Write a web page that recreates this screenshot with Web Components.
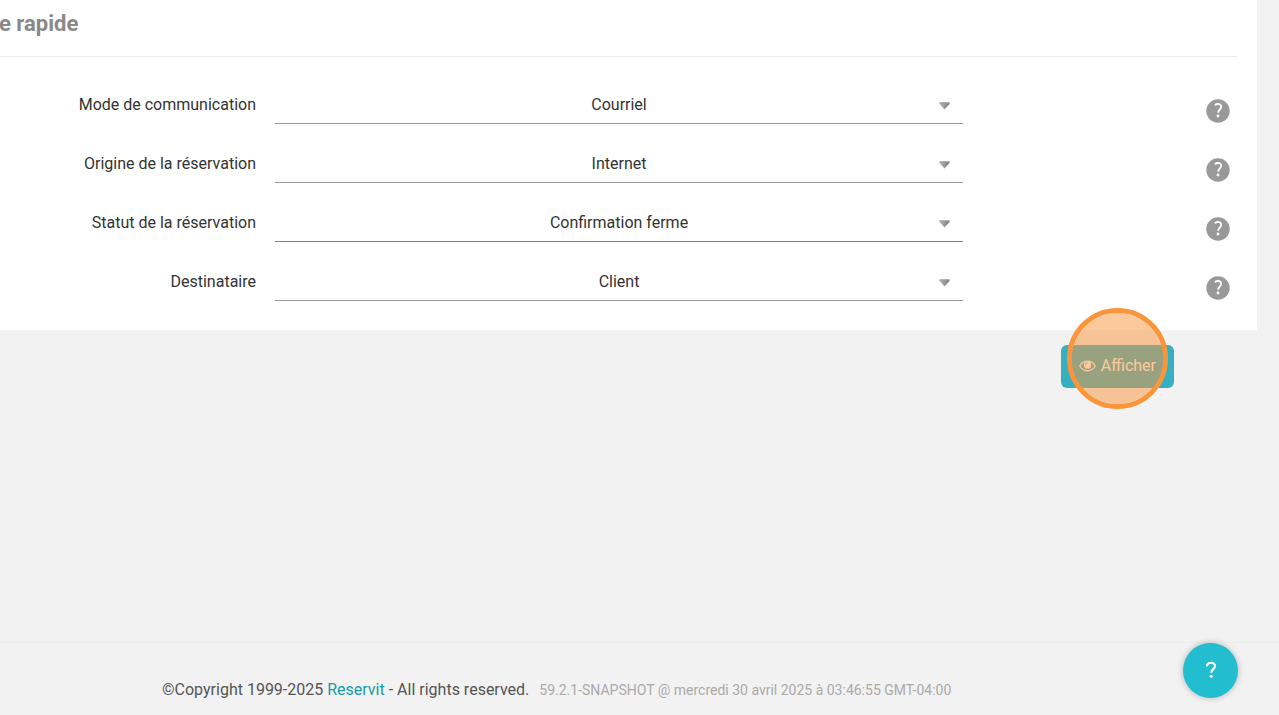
<!DOCTYPE html>
<html lang="fr">
<head>
<meta charset="utf-8">
<meta name="viewport" content="width=device-width, initial-scale=1">
<title>Reservit</title>
<style>
  html, body { margin: 0; height: 100%; }
  body { background: #f2f2f2; color: #333; font: 16px/24px Roboto, sans-serif; }
</style>
</head>
<body>
<quick-page>
  <quick-card>
    <span slot="title">e rapide</span>
    <field-row label="Mode de communication" value="Courriel"></field-row>
    <field-row label="Origine de la réservation" value="Internet"></field-row>
    <field-row label="Statut de la réservation" value="Confirmation ferme" active></field-row>
    <field-row label="Destinataire" value="Client"></field-row>
  </quick-card>
  <show-action>Afficher</show-action>
  <page-footer slot="footer"></page-footer>
  <help-bubble slot="footer"></help-bubble>
</quick-page>

<script>
const define = (name, html, setup) => {
  const template = document.createElement('template');
  template.innerHTML = html;
  customElements.define(name, class extends HTMLElement {
    constructor() {
      super();
      this.attachShadow({ mode: 'open' }).append(template.content.cloneNode(true));
    }
    connectedCallback() { if (setup) setup(this, this.shadowRoot); }
  });
};

define('quick-page', `
  <style>
    :host { display: flex; flex-direction: column; min-height: 100%; }
    main { flex: 1; }
  </style>
  <main><slot></slot></main>
  <slot name="footer"></slot>
`);

define('quick-card', `
  <style>
    :host { display: block; margin-right: 22px; background: #fff; }
    header { margin-right: 20px; padding: 8px 0 16px; border-bottom: 1px solid #ebebeb; }
    h2 { margin: 0 0 0 -1px; font-size: 22px; line-height: 32px; font-weight: 700; color: #888; }
    form { display: grid; gap: 20px; padding: 28px 27px 29px 0; }
  </style>
  <header><h2><slot name="title"></slot></h2></header>
  <form><slot></slot></form>
`);

define('field-row', `
  <style>
    :host { display: grid; grid-template-columns: 256fr 688fr 248fr; column-gap: 19px; height: 39px; }
    label { text-align: right; line-height: 39px; white-space: nowrap; }
    .box { position: relative; }
    select {
      appearance: none; display: block; box-sizing: border-box; width: 100%; height: 39px;
      margin: 0; padding: 2px 0 0; border: 0; border-bottom: 1px solid #999; border-radius: 0;
      background: transparent; color: inherit; font: inherit; text-align-last: center; outline: 0;
    }
    select.active { border-bottom-color: #1fa5b6; }
    .arrow { position: absolute; right: 13px; top: 17px; pointer-events: none; }
    button { justify-self: end; align-self: end; width: 24px; height: 24px; margin: 0 0 1px; padding: 0; border: 0; background: none; }
    button svg { display: block; }
  </style>
  <label for="field"></label>
  <div class="box">
    <select id="field"><option></option></select>
    <svg class="arrow" width="11" height="8" viewBox="0 0 11 8" aria-hidden="true">
      <defs><linearGradient id="shade" x1="0" y1="0" x2="1" y2="0"><stop stop-color="#bbb"/><stop offset="1" stop-color="#777"/></linearGradient></defs>
      <path d="M0.5 0.5h10v1.5L5.5 7.500.5 2z" fill="url(#shade)"/>
      <path d="M0.5 1h10" stroke="#999"/>
    </svg>
  </div>
  <button type="button" aria-label="Aide">
    <svg width="24" height="24" viewBox="0 0 24 24" aria-hidden="true">
      <circle cx="12" cy="12" r="11.700" fill="#999"/>
      <path d="M8.900 6.200C11.300 4.200 15.200 4.800 15.200 7.800C15.200 10.300 12.300 10.500 12.100 13.800" fill="none" stroke="#fff" stroke-width="1.800"/>
      <circle cx="12" cy="17" r="1.400" fill="#fff"/>
    </svg>
  </button>
`, (host, root) => {
  root.querySelector('label').textContent = host.getAttribute('label');
  root.querySelector('option').textContent = host.getAttribute('value');
  root.querySelector('select').classList.toggle('active', host.hasAttribute('active'));
});

define('show-action', `
  <style>
    :host { display: flex; justify-content: flex-end; padding: 15px 105px 0 0; }
    .anchor { position: relative; }
    button {
      display: flex; align-items: center; gap: 5px; height: 43px; padding: 0 18px 2px;
      border: 0; border-radius: 6px; background: #36b0c1; color: #fff; font: inherit;
    }
    .click {
      position: absolute; left: 6px; top: -37px; box-sizing: border-box; width: 101px; height: 101px;
      border: 5px solid #fb953b; border-radius: 50%; background: #fa943c80; background-clip: padding-box; pointer-events: none;
    }
  </style>
  <div class="anchor">
    <button type="button">
      <svg width="17" height="12" viewBox="0 0 17 12" aria-hidden="true">
        <path d="M.7 6C4.300-.500 12.700-.500 16.300 6C12.700 12.300 4.300 12.300.7 6z" fill="none" stroke="#fff" stroke-width="1.300"/>
        <circle cx="8.500" cy="5" r="3.700" fill="#fff"/>
        <path d="M6.300 5a2.200 2.200 0 0 1 2.200-2.200" fill="none" stroke="#36b0c1" stroke-width=".8"/>
      </svg>
      <span><slot></slot></span>
    </button>
    <div class="click"></div>
  </div>
`);

define('page-footer', `
  <style>
    :host { display: block; border-top: 1px solid #ececec; padding: 35px 0 13px; }
    p { margin: 0 0 0 162px; color: #555; }
    a { color: #1899a8; text-decoration: none; }
    small { margin-left: 6px; font-size: 14px; color: #aaa; }
  </style>
  <p>©Copyright 1999-2025 <a href="#">Reservit</a> - All rights reserved. <small>59.2.1-SNAPSHOT @ mercredi 30 avril 2025 à 03:46:55 GMT-04:00</small></p>
`);

define('help-bubble', `
  <style>
    :host { position: fixed; right: 41px; bottom: 17px; }
    button {
      display: grid; place-items: center; width: 55px; height: 55px; padding: 0 0 2px; border: 0; border-radius: 50%;
      background: #23bdd0; box-shadow: 0 0 6px #0004;
    }
  </style>
  <button type="button" aria-label="Aide en ligne">
    <svg width="12" height="18" viewBox="0 0 12 18" aria-hidden="true">
      <path d="M1.900 5.400C2.100.500 10.100.600 10 5.200C10 8.100 6.300 8.200 6.200 11.700" fill="none" stroke="#fff" stroke-width="2.200"/>
      <circle cx="6.200" cy="15.200" r="1.500" fill="#fff"/>
    </svg>
  </button>
`);
</script>
</body>
</html>
